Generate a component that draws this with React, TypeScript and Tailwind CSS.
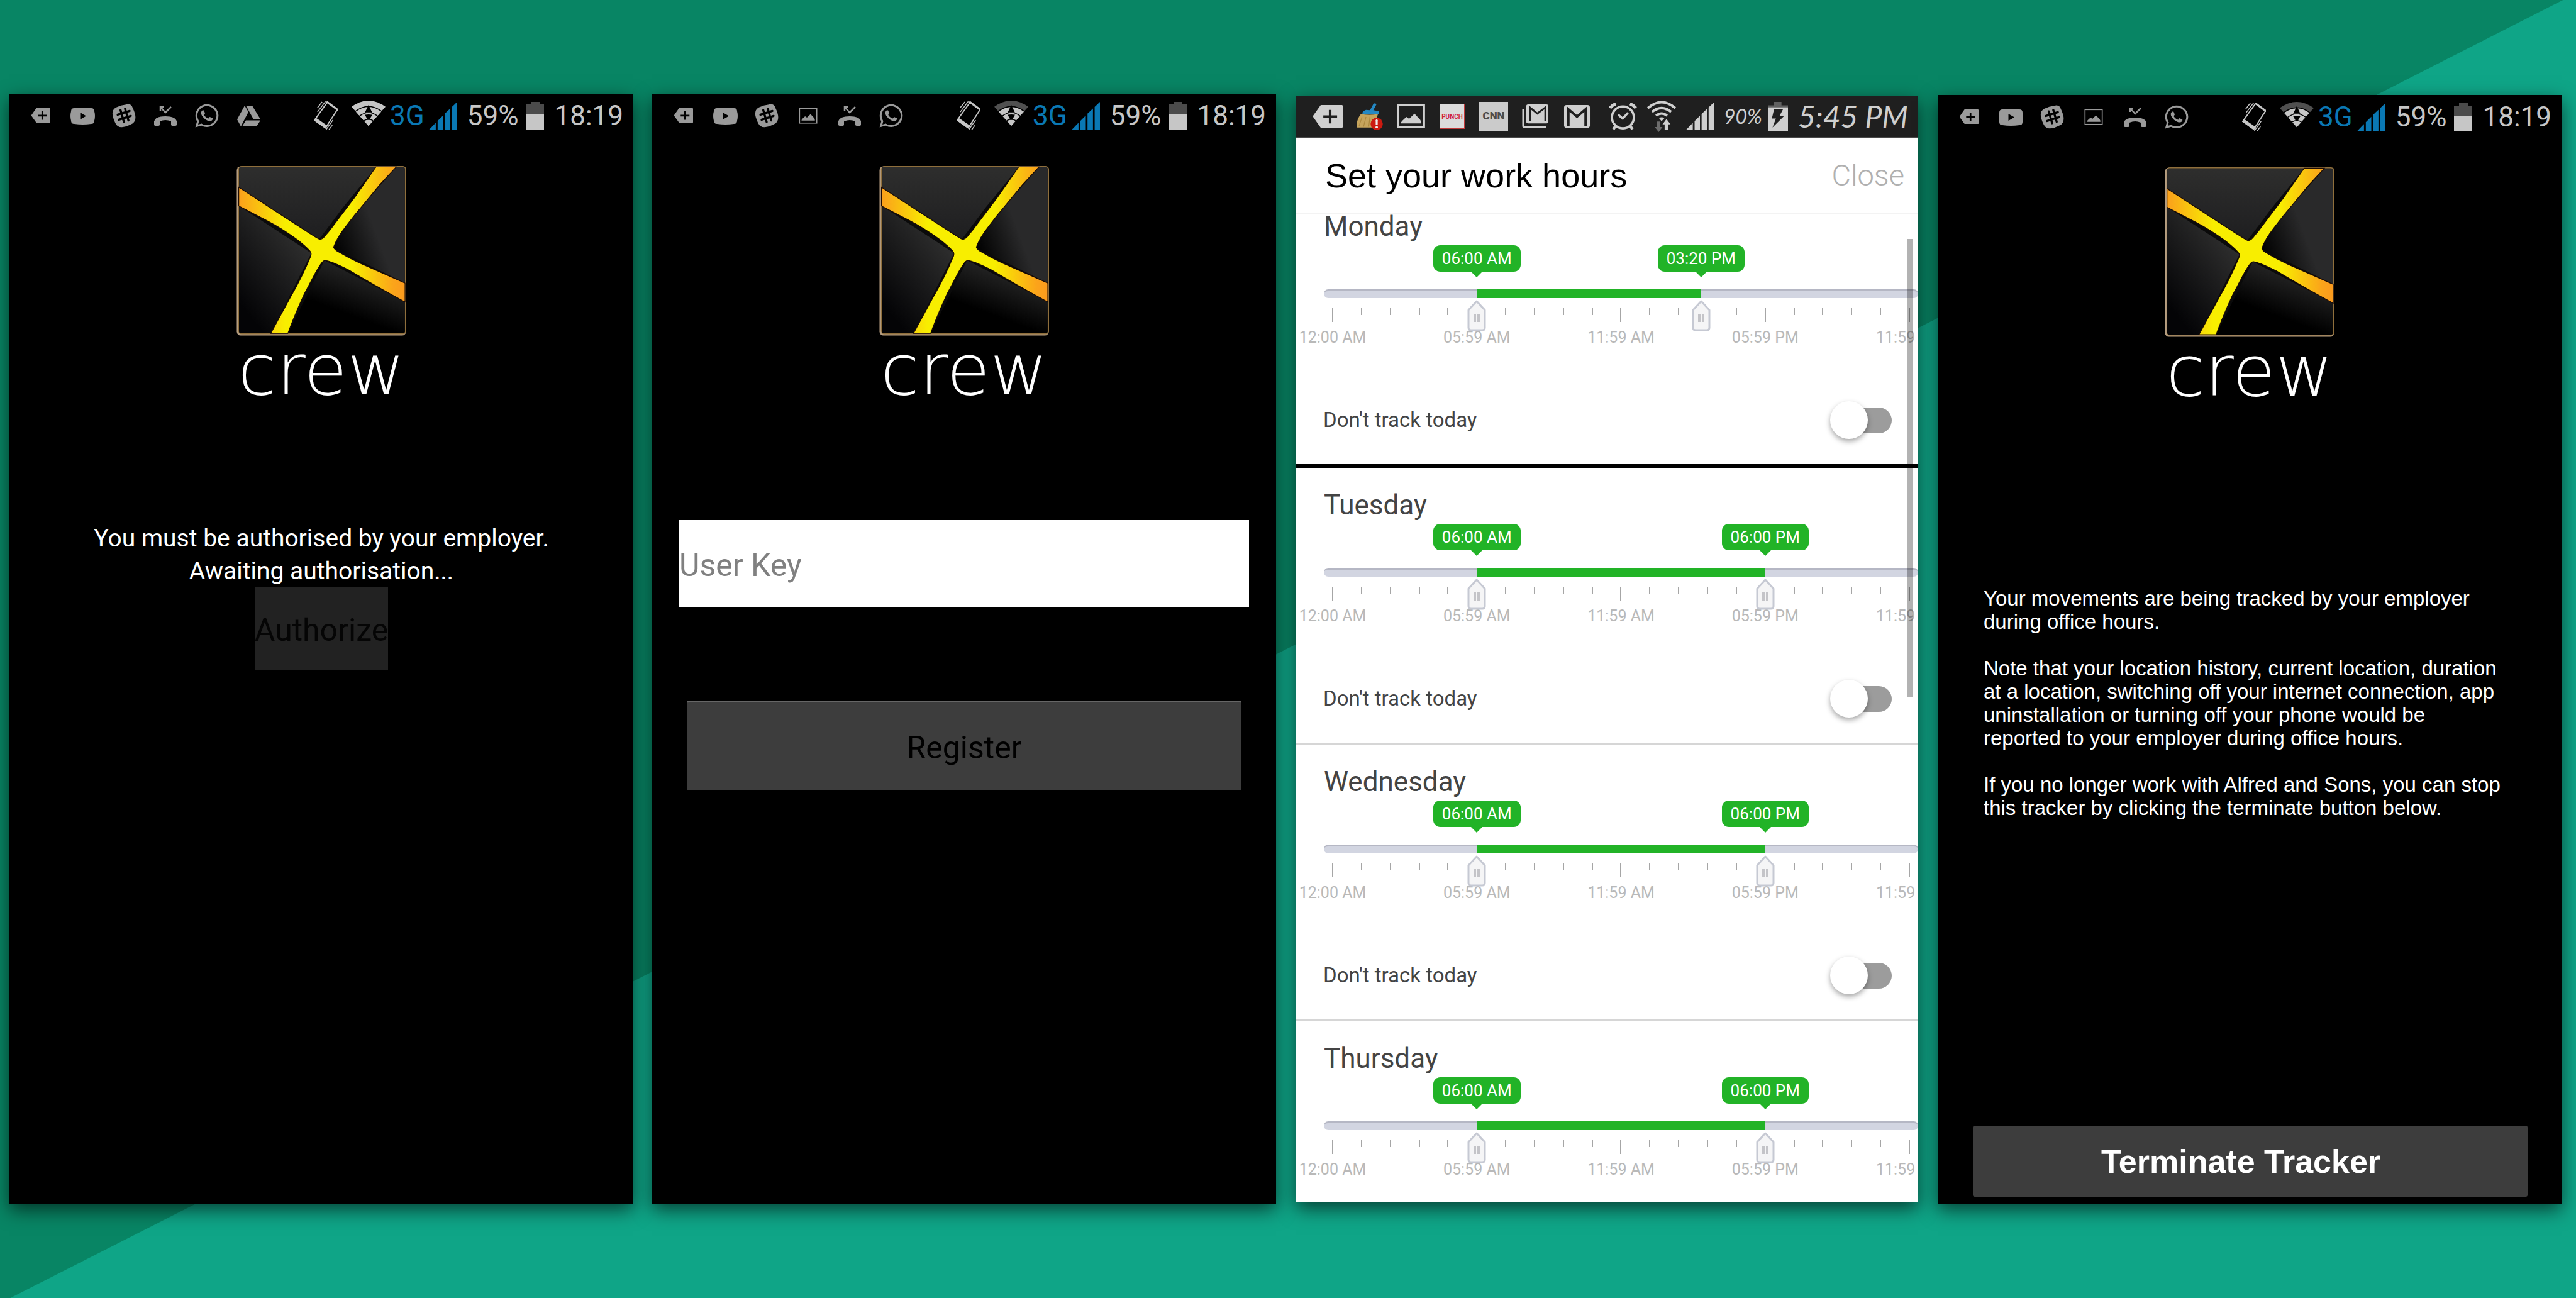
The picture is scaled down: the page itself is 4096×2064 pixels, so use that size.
import type { ReactNode } from "react";
import { FaWhatsapp } from "react-icons/fa";

/* ---------- status bar icons ---------- */

function TagPlusIcon({ className, ink }: { className: string; ink: string }) {
  return (
    <svg viewBox="0 0 195 150" className={className} aria-hidden="true">
      <path d="M50 0H189Q195 0 195 6V144Q195 150 189 150H50L0 79V71Z" fill="currentColor" />
      <path d="M112 32V121M67 77H158" stroke={ink} strokeWidth="17" />
    </svg>
  );
}

function YoutubeIcon() {
  return (
    <svg viewBox="0 0 39 27" className="w-[39px]" aria-hidden="true">
      <path d="M6 1Q19.500 -1 33 1Q38 1 38 6Q40 13.500 38 21Q38 26 33 26Q19.500 28 6 26Q1 26 1 21Q-1 13.500 1 6Q1 1 6 1Z" fill="currentColor" />
      <path d="M15.500 8V19L25 13.500Z" fill="#000" />
    </svg>
  );
}

function HashBlobIcon() {
  return (
    <svg viewBox="0 0 100 100" className="w-[38px]" aria-hidden="true">
      <path d="M59 3Q80 -4 87 18Q112 70 82 85Q30 112 15 82Q-12 30 18 15Q38 5 59 3Z" fill="currentColor" />
      <g stroke="#000" strokeWidth="9" strokeLinecap="round">
        <path d="M36 27L50 76M55 21L69 70M24 46L74 30M29 67L79 51" />
      </g>
    </svg>
  );
}

function MissedCallIcon() {
  return (
    <svg viewBox="0 0 36 31" className="w-[36px]" aria-hidden="true">
      <path d="M10 7V1H15M10 1L18 10L27 1" fill="none" stroke="currentColor" strokeWidth="2.500" />
      <path d="M0 29V24Q2 16 18 16Q34 16 36 24V29Q36 31 34 31H29Q27 31 27 29V24Q18 20 9 24V29Q9 31 7 31H2Q0 31 0 29Z" fill="currentColor" />
    </svg>
  );
}

function DriveIcon() {
  return (
    <svg viewBox="0 0 37 33" className="w-[37px]" aria-hidden="true">
      <path d="M12 0L18 10L6 33L0 22Z" fill="currentColor" />
      <path d="M14 0H24L37 21.500H26Z" fill="currentColor" />
      <path d="M14 23.500H37L31 33H8Z" fill="currentColor" />
    </svg>
  );
}

function PictureIcon({ className, heavy }: { className: string; heavy?: boolean }) {
  return (
    <svg viewBox="0 0 184 160" className={className} aria-hidden="true">
      <rect x="8" y="8" width="168" height="144" fill="none" stroke="currentColor" strokeWidth={heavy ? 15 : 10} />
      <path d="M27 128Q27 118 34 112L62 86L80 98L115 64L152 104Q158 110 158 128Z" fill="currentColor" />
    </svg>
  );
}

function VibrateIcon() {
  return (
    <svg viewBox="0 0 156 188" className="mr-[6px] h-[46px]" aria-hidden="true">
      <path d="M88 6L153 54L76 174L5 122Z" fill="none" stroke="currentColor" strokeWidth="8" strokeLinejoin="round" />
      <path d="M14 108L90 160L76 178L0 125Z" fill="currentColor" />
      <path d="M88 6L153 54" stroke="currentColor" strokeWidth="13" strokeLinecap="round" />
      <path d="M24 70L76 1M24 42L54 4M80 184L124 122M98 186L120 156" stroke="currentColor" strokeWidth="6" />
    </svg>
  );
}

function WifiFanIcon({ weak }: { weak: boolean }) {
  return (
    <svg viewBox="0 0 220 196" className="w-[54px]" aria-hidden="true">
      <path d="M110 164L0 40Q110 -40 220 40Z" fill={weak ? "#505050" : "currentColor"} />
      <path d="M110 164L28 71Q110 12 192 71Z" fill="currentColor" />
      <g fill="none" stroke="#000" strokeWidth="6">
        <path d="M24 70Q110 5 196 70" />
        <path d="M52 99Q110 55 168 99" />
        <path d="M80 130Q110 112 140 130" />
      </g>
      <path d="M110 28L86 78Q110 70 134 78Z" fill="#000" />
      <path d="M86 92Q110 88 134 92L116 124H104Z" fill="#000" />
    </svg>
  );
}

function SignalIcon({ className }: { className: string }) {
  return (
    <svg viewBox="0 0 182 180" className={className} aria-hidden="true">
      <g fill="currentColor">
        <path d="M0 180L44 134V180Z" />
        <path d="M56 180V122L91 88V180Z" />
        <path d="M102 180V76L137 42V180Z" />
        <path d="M148 180V32L182 0V180Z" />
      </g>
    </svg>
  );
}

function BatteryIcon() {
  return (
    <svg viewBox="0 0 29 44" className="w-[29px]" aria-hidden="true">
      <path d="M8 0H22V4H29V21H0V4H8Z" fill="#4b4b4b" />
      <path d="M0 20H29V44H0Z" fill="currentColor" />
    </svg>
  );
}

function BroomIcon() {
  return (
    <svg viewBox="0 0 177 177" className="w-[43px]" aria-hidden="true">
      <path d="M32 72Q90 80 144 72Q130 110 122 159H4Q2 110 32 72Z" fill="#c6a45c" />
      <path d="M40 90L20 152M66 90L50 154M92 90L84 154" stroke="#ab873e" strokeWidth="5" />
      <path d="M115 4Q128 -4 134 8L114 46L150 52V70Q90 78 40 68Q46 50 66 44L92 46Z" fill="#2488c4" />
      <circle cx="136" cy="136" r="40" fill="#cc1a10" />
      <path d="M136 112V138" stroke="#eee" strokeWidth="13" strokeLinecap="round" />
      <circle cx="136" cy="157" r="8" fill="#eee" />
    </svg>
  );
}

function MailIcon({ stacked }: { stacked?: boolean }) {
  return (
    <svg viewBox="0 0 44 40" className="w-[43px]" aria-hidden="true">
      {stacked ? (
        <>
          <path d="M2 9V36Q2 38 4 38H39" fill="none" stroke="currentColor" strokeWidth="3" />
          <rect x="7" y="1" width="36" height="31" rx="3" fill="currentColor" />
          <path d="M13 28V6L25 16L38 6V28" fill="none" stroke="#1f1f1f" strokeWidth="3" />
        </>
      ) : (
        <>
          <rect x="1" y="2" width="42" height="37" rx="4" fill="currentColor" />
          <path d="M8 36V9L22 21L36 9V36" fill="none" stroke="#1f1f1f" strokeWidth="4" />
        </>
      )}
    </svg>
  );
}

function AlarmIcon() {
  return (
    <svg viewBox="0 0 186 184" className="w-[45px]" aria-hidden="true">
      <g fill="none" stroke="currentColor">
        <circle cx="93" cy="98" r="72" strokeWidth="15" />
        <path d="M62 80L92 106L126 68" strokeWidth="14" />
        <path d="M8 36Q22 18 46 8M178 36Q164 18 140 8" strokeWidth="20" />
        <path d="M44 156L30 176M142 156L156 176" strokeWidth="18" />
      </g>
    </svg>
  );
}

function WifiTransferIcon() {
  return (
    <svg viewBox="0 0 188 204" className="w-[46px]" aria-hidden="true">
      <g fill="none" stroke="currentColor" strokeWidth="16">
        <path d="M5 48Q94 -28 183 48" />
        <path d="M32 73Q94 24 156 73" />
        <path d="M58 98Q94 70 130 98" />
      </g>
      <path d="M78 114Q94 102 112 114L94 134Z" fill="currentColor" />
      <path d="M64 136H86V172H100L75 204L50 172H64Z" fill="#6c6c6c" />
      <path d="M114 188H138V154H152L126 120L100 154H114Z" fill="currentColor" />
    </svg>
  );
}

function ChargingIcon() {
  return (
    <svg viewBox="0 0 130 188" className="w-[32px]" aria-hidden="true">
      <path d="M40 0H88V22H130V40H0V22H40Z" fill="#606060" />
      <path d="M0 36H130V188H0Z" fill="currentColor" />
      <path d="M40 48H98L76 90H106L30 166L52 108H26Z" fill="#1f1f1f" />
    </svg>
  );
}

/* ---------- shared pieces ---------- */

function Slots({ icons }: { icons: ReactNode[] }) {
  return (
    <div className="flex items-center pl-[17px]">
      {icons.map((icon, i) => (
        <span key={i} className="flex w-[66px] justify-center">
          {icon}
        </span>
      ))}
    </div>
  );
}

function DarkStatusBar({ icons, weakWifi }: { icons: ReactNode[]; weakWifi: boolean }) {
  return (
    <div className="flex h-[70px] shrink-0 items-center justify-between pr-[16px] text-[#9a9a9a]">
      <Slots icons={icons} />
      <div className="flex items-center gap-[16px] text-[44px] leading-[52px] text-[#c6c6c6]">
        <VibrateIcon />
        <div className="flex items-center gap-[7px]">
          <WifiFanIcon weak={weakWifi} />
          <span className="text-[#0a78b4]">3G</span>
          <SignalIcon className="w-[45px] text-[#0a78b4]" />
        </div>
        <div className="flex items-center gap-[12px]">
          <span>59%</span>
          <BatteryIcon />
        </div>
        <span>18:19</span>
      </div>
    </div>
  );
}

function Brand({ id }: { id: string }) {
  return (
    <div className="flex shrink-0 flex-col items-center pt-[45px]">
      <svg viewBox="0 0 1114 1114" className="w-[270px]" aria-hidden="true">
        <defs>
          <linearGradient id={id + "-beam"} x1="13" x2="1107" y1="0" y2="0" gradientUnits="userSpaceOnUse">
            <stop offset="0" stopColor="#fb9f1c" />
            <stop offset="0.280" stopColor="#f8ee00" />
            <stop offset="0.680" stopColor="#f8ee00" />
            <stop offset="0.930" stopColor="#fba41a" />
            <stop offset="1" stopColor="#fb9a1e" />
          </linearGradient>
          <linearGradient id={id + "-top"} x1="0" x2="0" y1="0" y2="1">
            <stop offset="0" stopColor="#2e2e2d" />
            <stop offset="1" stopColor="#1e1e20" />
          </linearGradient>
          <linearGradient id={id + "-left"} x1="0.700" x2="0.200" y1="0.200" y2="0.900">
            <stop offset="0" stopColor="#2c2c2c" />
            <stop offset="1" stopColor="#040406" />
          </linearGradient>
          <linearGradient id={id + "-right"} x1="0" x2="0.500" y1="0.700" y2="0.400">
            <stop offset="0" stopColor="#000" />
            <stop offset="1" stopColor="#29292a" />
          </linearGradient>
          <linearGradient id={id + "-bottom"} x1="0.450" x2="0.750" y1="0.700" y2="0.200">
            <stop offset="0" stopColor="#000" />
            <stop offset="1" stopColor="#262626" />
          </linearGradient>
        </defs>
        <rect x="2" y="2" width="1110" height="1110" rx="26" fill="#b59d80" />
        <rect x="12" y="0" width="1102" height="1104" rx="22" fill="#8f6f3c" />
        <rect x="17" y="7" width="1088" height="1090" rx="14" fill="#0a0a0a" />
        <path d="M17 20Q17 7 30 7H915L700 270Q580 430 543 479L17 139Z" fill={"url(#" + id + "-top)"} />
        <path d="M17 262L491 571L225 1097H30Q17 1097 17 1084Z" fill={"url(#" + id + "-left)"} />
        <path d="M1048 7H1092Q1105 7 1105 20V767L635 536Q700 410 835 250Z" fill={"url(#" + id + "-right)"} />
        <path d="M577 619L1105 890V1084Q1105 1097 1092 1097H337Z" fill={"url(#" + id + "-bottom)"} />
        <path
          d="M15 139L285 316Q400 390 500 455Q530 474 548 482Q570 478 590 448Q620 415 635 391L775 207L915 6H1048L940 122L835 250Q770 325 715 400Q660 470 637 532Q640 545 660 558Q730 600 805 635L1106 768V892Q900 780 735 681Q640 632 592 621Q574 614 560 634Q530 675 500 735L445 839Q380 980 337 1098H225L355 859Q430 730 488 590Q492 576 488 566Q470 540 400 484Q300 410 200 358L15 262Z"
          fill={"url(#" + id + "-beam)"}
          stroke="#1c0b04"
          strokeWidth="5"
        />
      </svg>
      <div className="mt-[4px] font-['DejaVu_Sans'] text-[112px] leading-[100px] font-extralight text-white">crew</div>
    </div>
  );
}

function Phone({ className, label, children }: { className: string; label: string; children: ReactNode }) {
  return (
    <section
      aria-label={label}
      className={"relative flex min-h-0 flex-col overflow-hidden shadow-[0_10px_28px_rgba(0,0,0,0.6)] " + className}
    >
      {children}
    </section>
  );
}

/* ---------- work hours ---------- */

const dayMinutes = 1440;
const scaleLabels = ["12:00 AM", "05:59 AM", "11:59 AM", "05:59 PM", "11:59 PM"];

type Day = { name: string; from: number; to: number; fromText: string; toText: string };

const days: Day[] = [
  { name: "Monday", from: 360, to: 920, fromText: "06:00 AM", toText: "03:20 PM" },
  { name: "Tuesday", from: 360, to: 1080, fromText: "06:00 AM", toText: "06:00 PM" },
  { name: "Wednesday", from: 360, to: 1080, fromText: "06:00 AM", toText: "06:00 PM" },
  { name: "Thursday", from: 360, to: 1080, fromText: "06:00 AM", toText: "06:00 PM" },
];

function percent(minutes: number) {
  return (minutes / dayMinutes) * 100 + "%";
}

function Bubble({ at, text }: { at: number; text: string }) {
  return (
    <div className="absolute top-0 flex w-0 flex-col items-center" style={{ left: percent(at) }}>
      <span className="rounded-[11px] bg-[#22b327] px-[14px] text-[26px] leading-[42px] whitespace-nowrap text-white">
        {text}
      </span>
      <svg viewBox="0 0 18 9" className="w-[18px] shrink-0" aria-hidden="true">
        <path d="M0 0H18L9 9Z" fill="#22b327" />
      </svg>
    </div>
  );
}

function Handle({ at }: { at: number }) {
  return (
    <div className="absolute top-[17px] flex w-0 justify-center" style={{ left: percent(at) }}>
      <svg viewBox="0 0 30 50" className="w-[30px] shrink-0" aria-hidden="true">
        <path d="M15 2L28 16V44Q28 48 24 48H6Q2 48 2 44V16Z" fill="#f5f5f6" stroke="#c6c9d3" strokeWidth="3" strokeLinejoin="round" />
        <path d="M12 22V35M18 22V35" stroke="#c4c4c8" strokeWidth="4" />
      </svg>
    </div>
  );
}

function DayRow({ day, first }: { day: Day; first: boolean }) {
  return (
    <article
      className={
        "shrink-0 overflow-hidden pt-[33px] pb-[40px] " +
        (first ? "-mt-[40px] border-b-[6px] border-black" : "border-b-[3px] border-[#d6d6d6]")
      }
    >
      <h2 className="pl-[44px] text-[44px] leading-[52px] text-[#444]">{day.name}</h2>
      <div className="mt-[4px] ml-[44px]">
        <div className="relative mx-[14px] h-[51px]">
          <Bubble at={day.from} text={day.fromText} />
          <Bubble at={day.to} text={day.toText} />
        </div>
        <div className="relative mt-[19px] h-[14px] rounded-full border-t-[3px] border-[#b5b7c4] bg-[#d2d5e1]">
          <div className="absolute inset-x-[14px] -top-[3px] h-[14px]">
            <div
              className="absolute h-[14px] bg-[#22b327]"
              style={{ left: percent(day.from), width: percent(day.to - day.from) }}
            />
            <Handle at={day.from} />
            <Handle at={day.to} />
            <input
              type="range"
              min={0}
              max={dayMinutes}
              defaultValue={day.from}
              aria-label={day.name + " start"}
              className="absolute left-0 h-[50px] w-1/2 opacity-0"
            />
            <input
              type="range"
              min={0}
              max={dayMinutes}
              defaultValue={day.to}
              aria-label={day.name + " end"}
              className="absolute right-0 h-[50px] w-1/2 opacity-0"
            />
          </div>
        </div>
        <div className="mx-[13px] mt-[16px] flex h-[22px] justify-between">
          {Array.from({ length: 21 }, (_, i) => (
            <span
              key={i}
              className={
                "w-[2px] bg-[#a6a6a6] " + (i % 5 === 0 ? "h-[22px]" : "h-[11px]") + (i === 5 ? " invisible" : "")
              }
            />
          ))}
        </div>
        <div className="mx-[14px] mt-[10px] flex h-[30px] justify-between text-[25px] leading-[30px] text-[#b9b9b9]">
          {scaleLabels.map((text) => (
            <span key={text} className="flex w-0 justify-center whitespace-nowrap">
              {text}
            </span>
          ))}
        </div>
      </div>
      <label className="mt-[86px] flex h-[60px] items-center justify-between pr-[42px] pl-[43px] text-[33px] text-[#444]">
        Don't track today
        <span className="relative flex h-[60px] w-[98px] items-center justify-end">
          <input type="checkbox" className="peer absolute inset-0 opacity-0" />
          <span className="h-[41px] w-[86px] rounded-full bg-[#9c9c9c]" />
          <span className="absolute left-0 h-[60px] w-[60px] rounded-full bg-white shadow-[0_4px_9px_rgba(0,0,0,0.35)]" />
        </span>
      </label>
    </article>
  );
}

function WorkHoursPhone() {
  return (
    <Phone label="Work hours" className="mr-[1px] ml-[2px] mt-[3px] mb-[2px] bg-white">
      <div className="flex h-[68px] shrink-0 items-center justify-between border-b-2 border-[#4a4a4a] bg-[#1f1f1f] pr-[16px] text-[#cfcfcf]">
        <Slots
          icons={[
            <TagPlusIcon className="w-[47px]" ink="#1f1f1f" />,
            <BroomIcon />,
            <PictureIcon className="w-[45px]" heavy />,
            <span className="flex h-[40px] w-[40px] items-center justify-center border border-[#c23a3a] bg-[#dcdcdc] text-[10px] font-bold text-[#d0233c]">
              PUNCH
            </span>,
            <span className="flex h-[46px] w-[46px] items-center justify-center bg-[#cbcbcb] text-[17px] font-black text-[#4c4c4c]">
              CNN
            </span>,
            <MailIcon stacked />,
            <MailIcon />,
          ]}
        />
        <div className="flex items-center gap-[16px]">
          <AlarmIcon />
          <WifiTransferIcon />
          <SignalIcon className="w-[44px]" />
          <div className="flex items-center gap-[9px]">
            <span className="font-['Lato'] text-[32px] leading-[52px] italic">90%</span>
            <ChargingIcon />
          </div>
          <span className="font-['Lato'] text-[48px] leading-[52px] italic">5:45 PM</span>
        </div>
      </div>
      <header className="relative z-10 flex h-[121px] shrink-0 items-center justify-between border-b-[3px] border-[#f3f3f3] bg-white pr-[22px] pl-[46px]">
        <h1 className="font-['Liberation_Sans'] text-[54px] text-black">Set your work hours</h1>
        <button type="button" className="text-[47px] font-light text-[#b0b0b0]">
          Close
        </button>
      </header>
      <div className="relative flex min-h-0 flex-1 flex-col">
        <div className="flex min-h-0 flex-1 flex-col overflow-hidden">
          {days.map((day, i) => (
            <DayRow key={day.name} day={day} first={i === 0} />
          ))}
        </div>
        <div className="absolute top-[39px] right-[8px] h-[728px] w-[9px] bg-black/30" />
      </div>
    </Phone>
  );
}

/* ---------- page ---------- */

export default function App() {
  const tag = <TagPlusIcon className="w-[30px]" ink="#000" />;
  const chat = <FaWhatsapp className="text-[42px]" aria-hidden="true" />;
  const laterIcons = [
    tag,
    <YoutubeIcon />,
    <HashBlobIcon />,
    <PictureIcon className="w-[30px]" />,
    <MissedCallIcon />,
    chat,
  ];

  return (
    <main className="relative isolate h-screen overflow-hidden bg-[#088564] font-['Roboto',sans-serif]">
      <div className="absolute inset-0 -z-10 bg-[#0fa587] [clip-path:polygon(99.5%_0,100%_0,100%_100%,0.4%_100%)]" />
      <div className="grid h-full grid-cols-4 grid-rows-1 gap-[30px] pt-[149px] pr-[23px] pb-[150px] pl-[15px]">
        <Phone label="Authorisation" className="bg-black">
          <DarkStatusBar
            weakWifi={false}
            icons={[tag, <YoutubeIcon />, <HashBlobIcon />, <MissedCallIcon />, chat, <DriveIcon />]}
          />
          <Brand id="auth" />
          <p className="mt-[192px] text-center text-[39px] leading-[52px] text-white">
            You must be authorised by your employer.
            <br />
            Awaiting authorisation...
          </p>
          <button
            type="button"
            className="h-[132px] self-center overflow-hidden bg-[#222] pt-[4px] text-[50px] text-[#050505]"
          >
            Authorize
          </button>
        </Phone>

        <Phone label="Registration" className="bg-black">
          <DarkStatusBar weakWifi icons={laterIcons} />
          <Brand id="register" />
          <form className="mt-[189px] flex flex-col px-[43px]">
            <input
              type="text"
              aria-label="User Key"
              placeholder="User Key"
              className="h-[139px] bg-white pt-[4px] text-[50px] text-black placeholder:text-[#808080]"
            />
            <button
              type="button"
              className="mx-[12px] mt-[148px] h-[143px] rounded-[4px] border-t-[3px] border-[#666] bg-[#3d3d3d] pt-[4px] text-[50px] text-black"
            >
              Register
            </button>
          </form>
        </Phone>

        <WorkHoursPhone />

        <Phone label="Tracking notice" className="mt-[2px] bg-black">
          <DarkStatusBar weakWifi icons={laterIcons} />
          <Brand id="notice" />
          <div className="mt-[293px] flex flex-col gap-[37px] pr-[92px] pl-[73px] font-['Liberation_Sans'] text-[33px] leading-[37px] text-white">
            <p>Your movements are being tracked by your employer during office hours.</p>
            <p>
              Note that your location history, current location, duration at a location, switching off your internet
              connection, app uninstallation or turning off your phone would be reported to your employer during office
              hours.
            </p>
            <p>
              If you no longer work with Alfred and Sons, you can stop this tracker by clicking the terminate button
              below.
            </p>
          </div>
          <button
            type="button"
            className="mr-[54px] mb-[11px] ml-[56px] mt-auto h-[113px] rounded-[3px] bg-[#3d3d3d] pr-[30px] font-['Liberation_Sans'] text-[52px] font-bold text-white"
          >
            Terminate Tracker
          </button>
        </Phone>
      </div>
    </main>
  );
}
